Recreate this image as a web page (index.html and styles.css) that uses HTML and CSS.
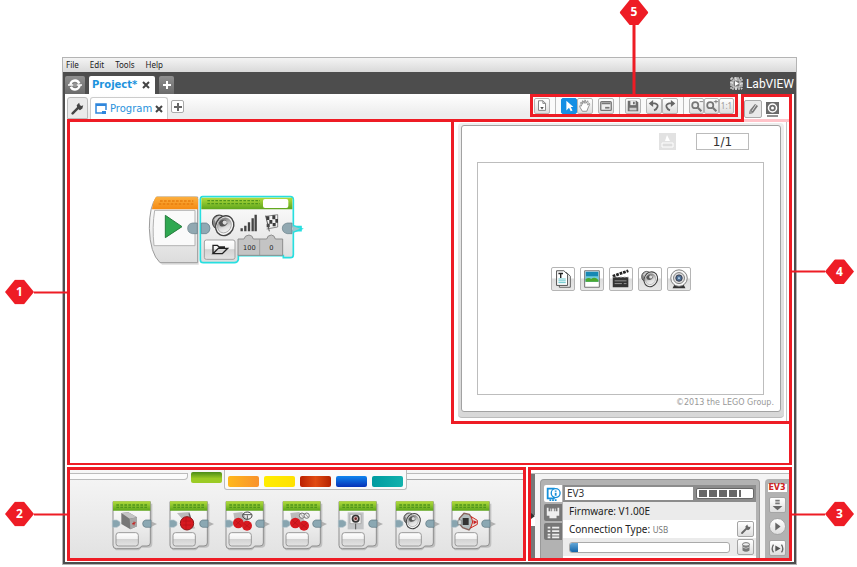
FILE: index.html
```html
<!DOCTYPE html>
<html lang="en">
<head>
<meta charset="utf-8">
<title>EV3 Programming Interface</title>
<link rel="stylesheet" href="styles.css">
</head>
<body>
<svg class="defs" aria-hidden="true">
  <defs>
    <linearGradient id="green" x1="0" y1="0" x2="0" y2="1"><stop offset="0" stop-color="#b2dc3c"/><stop offset="1" stop-color="#5da51c"/></linearGradient>
    <linearGradient id="orange" x1="0" y1="0" x2="0" y2="1"><stop offset="0" stop-color="#fcb040"/><stop offset="1" stop-color="#f58a12"/></linearGradient>
    <linearGradient id="shell" x1="0" y1="0" x2="0" y2="1"><stop offset="0" stop-color="#fff"/><stop offset="1" stop-color="#dcdcdc"/></linearGradient>
    <linearGradient id="key" x1="0" y1="0" x2="0" y2="1"><stop offset="0" stop-color="#fff"/><stop offset=".45" stop-color="#f2f2f2"/><stop offset=".5" stop-color="#d2d2d2"/><stop offset="1" stop-color="#e4e4e4"/></linearGradient>
    <linearGradient id="cone" x1="0" y1="0" x2="1" y2="1"><stop offset="0" stop-color="#555"/><stop offset=".6" stop-color="#ddd"/><stop offset="1" stop-color="#fff"/></linearGradient>
    <symbol id="block" viewBox="0 0 138 156">
      <path d="M11 14H124V134Q124 146 112 146H92L84 154H18Q11 154 11 146Z" fill="#a9a9a9" opacity=".6"/>
      <path d="M6 8H118V132Q118 141 108 141H92Q88 149 78 149H16Q6 149 6 139Z" fill="url(#shell)" stroke="#8e8e8e" stroke-width="3"/>
      <path d="M6 7H118V35H6Z" fill="url(#green)"/>
      <path d="M16 18H108M16 25H108" stroke="#4f951b" stroke-width="4" stroke-dasharray="8 4"/>
      <path d="M4 63H18L27 69V79L18 85H4Z" fill="#88a5b0" stroke="#b8c6cc" stroke-width="2"/>
      <path d="M118 66L138 75L118 85Z" fill="#b0b0b0"/>
      <path d="M120 63H104Q95 65 95 74T104 85H120Z" fill="#8ba8b3" stroke="#5e7681" stroke-width="2"/>
      <rect x="15" y="101" width="67" height="40" rx="8" fill="url(#key)" stroke="#999" stroke-width="3"/>
    </symbol>
    <symbol id="speaker" viewBox="0 0 70 70">
      <ellipse cx="22" cy="26" rx="19" ry="20" fill="#888" stroke="#444" stroke-width="3"/>
      <path d="M8 18Q18 4 30 9L20 44Z" fill="#ccc"/>
      <ellipse cx="38" cy="36" rx="25" ry="29" transform="rotate(28 38 36)" fill="#f4f4f4" stroke="#444" stroke-width="4"/>
      <ellipse cx="37" cy="35" rx="19" ry="22" transform="rotate(28 37 35)" fill="url(#cone)" stroke="#999" stroke-width="2"/>
      <path d="M21 28Q27 17 41 20L46 30Q38 42 25 37Z" fill="#555"/>
      <circle cx="38" cy="27" r="6" fill="#ddd"/>
    </symbol>
    <symbol id="wrench" viewBox="0 0 16 16"><path d="M2 14L9 7" stroke="currentColor" stroke-width="3" stroke-linecap="round"/><path d="M8 8L7 4L10 1L11 4L13 5L15 4L14 8L11 10Z" fill="currentColor"/></symbol>
    <symbol id="close" viewBox="0 0 8 8"><path d="M1 1L7 7M7 1L1 7" stroke="currentColor" stroke-width="2"/></symbol>
    <symbol id="plus" viewBox="0 0 10 10"><path d="M5 1V9M1 5H9" stroke="currentColor" stroke-width="2"/></symbol>
  </defs>
</svg>

<main class="figure">
  <section class="window" aria-label="EV3 software">
    <nav class="menubar"><button>File</button><button>Edit</button><button>Tools</button><button>Help</button></nav>
    <div class="shell">
      <header class="titlebar">
        <button class="home" aria-label="Lobby"><svg width="14" height="14" viewBox="0 0 14 14"><circle cx="7" cy="7" r="4.500" fill="none" stroke="#fff" stroke-width="2.500" stroke-dasharray="12 2"/><path d="M0 7H6M8 7H14" stroke="#fff" stroke-width="1.500"/><circle cx="7" cy="7" r="2" fill="#999"/></svg></button>
        <div class="project-tab"><a href="#project">Project*</a><button aria-label="Close project"><svg width="8" height="8"><use href="#close"/></svg></button></div>
        <button class="add-project" aria-label="Add project"><svg width="10" height="10"><use href="#plus"/></svg></button>
        <div class="labview">
          <svg width="13" height="13" viewBox="0 0 13 13"><path d="M1 1H12V12H1Z" fill="#777" stroke="#eee" stroke-dasharray="2 1"/><path d="M3 3H10V10H3Z" fill="none" stroke="#ddd"/><path d="M5 4L9 6.500L5 9Z" fill="#fff"/><path d="M0 6H3M10 7H13M6 0V3M6 10V13" stroke="#fff"/></svg>
          <span>LabVIEW</span>
        </div>
      </header>

      <div class="document">
        <div class="docbar">
          <button class="tab-wrench" aria-label="Project properties"><svg width="13" height="13"><use href="#wrench"/></svg></button>
          <div class="program-tab">
            <svg width="12" height="12" viewBox="0 0 12 12"><path d="M7 10H1V1H11V7" fill="none" stroke="#2f86dc" stroke-width="1.500"/><path d="M1 2H11" stroke="#2f86dc" stroke-width="2"/><path d="M7 11V8H11V11Z" fill="#2f86dc"/></svg>
            <a href="#program">Program</a>
            <button aria-label="Close program"><svg width="8" height="8"><use href="#close"/></svg></button>
          </div>
          <button class="add-program" aria-label="Add program"><svg width="10" height="10"><use href="#plus"/></svg></button>

          <div class="toolbar" id="toolbar">
            <button class="tool" aria-label="Documentation"><svg viewBox="0 0 16 16"><path d="M4 2H9L12 5V13H4Z" fill="#fff" stroke="#777"/><path d="M9 2V5H12" fill="none" stroke="#777"/><path d="M6 9H10L8 12Z" fill="#555"/></svg></button>
            <i class="sep"></i>
            <div class="tool-group">
              <button class="tool active" aria-label="Select"><svg viewBox="0 0 16 16"><path d="M5 2V13L8 10L10 14L12 13L10 9H13Z" fill="#fff"/></svg></button>
              <button class="tool" aria-label="Pan"><svg viewBox="0 0 16 16"><path d="M5 14L2 9Q1 7 4 8L3 4Q4 3 5 6L5 2Q6 1 7 5L8 1Q9 1 9 5L11 2Q12 3 11 7L13 5Q14 6 12 9L10 14Z" fill="#fff" stroke="#888"/></svg></button>
            </div>
            <button class="tool" aria-label="Comment"><svg viewBox="0 0 16 16"><rect x="2" y="3" width="12" height="10" rx="1" fill="#eee" stroke="#777" stroke-width="1.500"/><path d="M3 5H13" stroke="#777" stroke-width="2"/><path d="M7 10H12" stroke="#777" stroke-width="2"/></svg></button>
            <i class="sep"></i>
            <button class="tool" aria-label="Save"><svg viewBox="0 0 16 16"><path d="M2 2H12L14 4V14H2Z" fill="#6e6e6e"/><path d="M5 2H11V7H5Z" fill="#eee"/><path d="M8 3H10V6H8Z" fill="#6e6e6e"/><path d="M4 10H12V13H4Z" fill="#ccc"/></svg></button>
            <div class="tool-group">
              <button class="tool" aria-label="Undo"><svg viewBox="0 0 16 16"><path d="M4 5H9Q13 6 12 9Q11 12 8 13" fill="none" stroke="#666" stroke-width="2"/><path d="M7 1V9L2 5Z" fill="#666"/></svg></button>
              <button class="tool" aria-label="Redo"><svg viewBox="0 0 16 16"><path d="M12 5H7Q3 6 4 9Q5 12 8 13" fill="none" stroke="#666" stroke-width="2"/><path d="M9 1V9L14 5Z" fill="#666"/></svg></button>
            </div>
            <i class="sep"></i>
            <div class="tool-group zoom">
              <button class="tool" aria-label="Zoom out"><svg viewBox="0 0 16 16"><circle cx="6" cy="7" r="3.500" fill="#eee" stroke="#777" stroke-width="2"/><path d="M9 10L13 14" stroke="#777" stroke-width="2.500"/><path d="M11 3H15" stroke="#777"/></svg></button>
              <button class="tool" aria-label="Zoom in"><svg viewBox="0 0 16 16"><circle cx="6" cy="7" r="3.500" fill="#eee" stroke="#777" stroke-width="2"/><path d="M9 10L13 14" stroke="#777" stroke-width="2.500"/><path d="M10 3H15M12.500 1V5" stroke="#777"/></svg></button>
              <button class="tool ratio">1:1</button>
            </div>
            <div class="callout up"><b>5</b></div>
          </div>

          <div class="side-tabs">
            <button class="edit" aria-label="Edit content"><svg width="14" height="14" viewBox="0 0 14 14"><path d="M4 8L9 2L12 4L7 11L3 12Z" fill="#777"/><path d="M6 9L10 3" stroke="#ddd"/><path d="M3 12L7 11L4 8Z" fill="#999"/></svg></button>
            <button class="view" aria-label="View content"><svg width="13" height="15" viewBox="0 0 13 15"><path d="M0 0H13V12H0Z" fill="#6b6b6b"/><circle cx="6.500" cy="6" r="4" fill="none" stroke="#fff" stroke-width="1.500"/><circle cx="6.500" cy="6" r="1.500" fill="#fff"/><path d="M1 14H12" stroke="#6b6b6b" stroke-width="1.500"/></svg></button>
          </div>
        </div>

        <div class="workspace" id="program">
          <div class="canvas">
            <svg class="program" width="170" height="85" viewBox="0 0 510 255" role="img" aria-label="Start block connected to a sound block">
              <path d="M58 41Q34 60 34 130T66 239H176V42Z" fill="#bbb" opacity=".5"/>
              <path d="M50 36Q28 62 28 130Q30 205 60 233H173V36Z" fill="url(#shell)" stroke="#9b9b9b" stroke-width="3"/>
              <path d="M48 35H165Q174 35 174 44V73H36Q39 48 48 35Z" fill="url(#orange)"/>
              <path d="M60 48H160M56 57H160" stroke="#e77e0e" stroke-width="4" stroke-dasharray="8 4"/>
              <path d="M44 76H165V182H42Q36 125 44 76Z" fill="#fafafa" stroke="#b3b3b3" stroke-width="3"/>
              <path d="M76 91L126 125L76 158Z" fill="#2fa851" stroke="#267d3d" stroke-width="3"/>
              <path d="M172 114H158Q143 116 143 130T158 146H172Z" fill="#91a8b1" stroke="#667d86" stroke-width="2"/>
              <path d="M188 35H451Q460 35 460 44V125H483V137H460V209Q460 218 451 218H430V212H295V224Q293 233 283 233H190Q181 233 181 224V44Q181 35 188 35Z" fill="url(#shell)" stroke="#27dfe0" stroke-width="5"/>
              <path d="M184 38H457V73H184Z" fill="url(#green)"/>
              <path d="M202 47H360M202 56H360" stroke="#4f951b" stroke-width="4" stroke-dasharray="8 4"/>
              <rect x="369" y="42" width="76" height="27" rx="6" fill="#fff"/>
              <path d="M184 114H199Q210 118 210 130T199 146H184Z" fill="#8fa9b4" stroke="#5d7986" stroke-width="2"/>
              <use href="#speaker" x="214" y="84" width="74" height="74"/>
              <path d="M305 139V130M316 139V122M327 139V112M338 139V100M347 139V89" stroke="#444" stroke-width="7"/>
              <path d="M377 94L413 89V126L380 132" fill="none" stroke="#555" stroke-width="2"/>
              <path d="M378 94H388V105H378ZM397 91H406V103H397ZM388 105H397V116H388ZM406 102H414V113H406ZM380 116H389V127H380ZM398 114H407V124H398Z" fill="#3d3d3d"/>
              <path d="M377 92L388 139" stroke="#555" stroke-width="3"/>
              <rect x="193" y="165" width="92" height="58" rx="6" fill="url(#key)" stroke="#a1a1a1" stroke-width="3"/>
              <path d="M219 206V181H232L237 186H253V191M219 206H247L263 190H235Z" fill="none" stroke="#222" stroke-width="4"/>
              <path d="M294 162H312Q314 151 327 150Q338 151 340 162H380Q382 151 394 150Q404 151 406 162H428V211H294Z" fill="#c4c4c4" stroke="#8e8e8e" stroke-width="3"/>
              <path d="M359 163V211" stroke="#8e8e8e" stroke-width="2"/>
              <text x="328" y="194" class="block-value">100</text>
              <text x="394" y="194" class="block-value">0</text>
              <path d="M456 114H442Q427 117 427 130T442 146H456Z" fill="#91a8b1" stroke="#667d86" stroke-width="2"/>
              <path d="M459 121L486 131L459 142" fill="#9cc7cb" stroke="#27dfe0" stroke-width="4"/>
            </svg>
          </div>
          <div class="editor">
            <div class="frame"><div class="card">
              <div class="pager">
                <svg width="17" height="17" viewBox="0 0 17 17"><path d="M0 0H17V17H0Z" fill="#e2e2e2"/><path d="M3 10H14V14H3Z" fill="#ddd" stroke="#fff"/><path d="M6 8L8 2L11 8Z" fill="#fff"/></svg>
                <input aria-label="Page" value="1/1" readonly>
              </div>
              <div class="page">
                <button aria-label="Text"><svg viewBox="0 0 24 24"><path d="M8 5H16L20 9V21H8Z" fill="#eee" stroke="#555"/><path d="M5 3H13L17 7V19H5Z" fill="#fff" stroke="#444"/><path d="M7 6H12M9.500 6V11" stroke="#222" stroke-width="1.500"/><path d="M7 12H15M7 14H15M7 16H15" stroke="#54bfc6"/></svg></button>
                <button aria-label="Image"><svg viewBox="0 0 24 24"><path d="M4 3H20V21H4Z" fill="#fff" stroke="#666"/><path d="M5 4H19V15H5Z" fill="#1788b4"/><path d="M5 9H19V15H5Z" fill="#70cbdc"/><path d="M5 14V12Q9 10 11 12Q15 9 19 13V15H5Z" fill="#4ca82e"/></svg></button>
                <button aria-label="Video"><svg viewBox="0 0 24 24"><path d="M3 10H20V21H3Z" fill="#333"/><path d="M3 9L20 3" stroke="#222" stroke-width="3" stroke-dasharray="3 1"/><path d="M3 10H20" stroke="#999" stroke-dasharray="2 2"/><path d="M5 14H18M5 17H13M15 17H18" stroke="#999"/></svg></button>
                <button aria-label="Sound"><svg viewBox="0 0 24 24"><use href="#speaker" x="2" y="2" width="20" height="20"/></svg></button>
                <button aria-label="Webcam"><svg viewBox="0 0 24 24"><path d="M7 18H17L19 22H5Z" fill="#333"/><circle cx="12" cy="11" r="9" fill="#f5f5f5" stroke="#777"/><circle cx="12" cy="11" r="6" fill="#ddd" stroke="#777"/><circle cx="12" cy="11" r="3.500" fill="#4f7196" stroke="#334"/><circle cx="12" cy="11" r="1" fill="#cfe8ff"/></svg></button>
              </div>
              <small>©2013 the LEGO Group.</small>
            </div></div>
            <i class="rail"></i>
            <div class="callout right"><b>4</b></div>
          </div>
          <div class="callout left"><b>1</b></div>
        </div>

        <div class="bottom">
          <section class="palette" aria-label="Programming palettes">
            <div class="categories">
              <i class="ledge before"></i>
              <div class="current"><button class="green" aria-label="Action"></button></div>
              <div class="others"><button class="amber" aria-label="Flow"></button><button class="yellow" aria-label="Sensor"></button><button class="red" aria-label="Data"></button><button class="blue" aria-label="Advanced"></button><button class="teal" aria-label="My blocks"></button></div>
              <i class="ledge after"></i>
            </div>
            <div class="blocks">
              <button aria-label="Medium motor"><svg viewBox="0 0 138 156"><use href="#block"/><path d="M31 42L52 40L78 55V82L58 91L31 75Z" fill="#777"/><path d="M31 42L52 40L78 55L56 59Z" fill="#c5c5c5"/><path d="M56 59L78 55V82L58 91Z" fill="#a7a7a7"/><path d="M63 75L74 71M69 68V79" stroke="#c5201f" stroke-width="3"/></svg></button>
              <button aria-label="Large motor"><svg viewBox="0 0 138 156"><use href="#block"/><path d="M27 42L65 39L73 75L82 88L66 91L50 68Z" fill="#bbb"/><path d="M63 43L70 65" stroke="#666" stroke-width="4"/><circle cx="57" cy="73" r="20" fill="#d71920" stroke="#8b1516" stroke-width="3"/><path d="M45 66H69M44 78H70M54 54V92" stroke="#b51318" stroke-width="2"/></svg></button>
              <button aria-label="Move steering"><svg viewBox="0 0 138 156"><use href="#block"/><path d="M28 42L55 39L81 82L71 93L32 65Z" fill="#bbb"/><circle cx="43" cy="72" r="16" fill="#d71920"/><circle cx="69" cy="80" r="15" fill="#d71920"/><path d="M34 64L52 80M35 79L51 63M59 73L79 88M60 88L78 72" stroke="#b51318" stroke-width="2"/><ellipse cx="70" cy="50" rx="14" ry="11" fill="none" stroke="#444" stroke-width="3"/><path d="M56 47H84M70 49V62" stroke="#555" stroke-width="3"/></svg></button>
              <button aria-label="Move tank"><svg viewBox="0 0 138 156"><use href="#block"/><path d="M28 42L55 39L81 82L71 93L32 65Z" fill="#bbb"/><circle cx="43" cy="72" r="16" fill="#d71920"/><circle cx="69" cy="80" r="15" fill="#d71920"/><path d="M34 64L52 80M35 79L51 63M59 73L79 88M60 88L78 72" stroke="#b51318" stroke-width="2"/><circle cx="63" cy="50" r="8" fill="#eee" stroke="#777" stroke-width="3"/><circle cx="77" cy="50" r="8" fill="#eee" stroke="#777" stroke-width="3"/><path d="M58 44L68 55M72 44L82 55" stroke="#777" stroke-width="2"/></svg></button>
              <button aria-label="Display"><svg viewBox="0 0 138 156"><use href="#block"/><path d="M32 40H80V91H32Z" fill="#c2c4c6"/><path d="M39 46H72V74H39Z" fill="#f1f1f1" stroke="#999" stroke-width="2"/><circle cx="56" cy="59" r="12" fill="#333"/><circle cx="56" cy="59" r="7" fill="#e6c6c5"/><circle cx="56" cy="59" r="4" fill="#6d2828"/><path d="M56 74V91" stroke="#555" stroke-width="3"/></svg></button>
              <button aria-label="Sound"><svg viewBox="0 0 138 156"><use href="#block"/><use href="#speaker" x="27" y="37" width="57" height="57"/></svg></button>
              <button aria-label="Brick status light"><svg viewBox="0 0 138 156"><use href="#block"/><path d="M28 58L42 43L58 46L68 61V78L57 93L38 86L28 74Z" fill="#b5bfc0" stroke="#87635c" stroke-width="4"/><path d="M38 57H56V78H38Z" fill="#333"/><path d="M24 63H34V77H24Z" fill="#d8dede" stroke="#777" stroke-width="2"/><path d="M64 53L82 64V76L62 87L68 69Z" fill="#e7ddd8" stroke="#cf3028" stroke-width="3"/><path d="M70 64L82 69L71 76Z" fill="#c91f26"/></svg></button>
            </div>
            <div class="callout left"><b>2</b></div>
          </section>

          <section class="hardware" aria-label="Hardware page">
            <button class="collapse" aria-label="Collapse"><svg width="4" height="6" viewBox="0 0 4 6"><path d="M0 0L4 3L0 6Z" fill="#333"/></svg></button>
            <div class="brick">
              <div class="brick-tabs">
                <button class="on" aria-label="Brick information"><svg viewBox="0 0 18 18"><path d="M3 3H10V14H3Z" fill="none" stroke="#168fd9" stroke-width="2"/><circle cx="12" cy="8" r="5" fill="#fff" stroke="#168fd9" stroke-width="1.500"/><path d="M12 5V6.500M12 7.500V11" stroke="#168fd9" stroke-width="2"/><path d="M5 16H13" stroke="#168fd9" stroke-width="2" stroke-dasharray="2 1"/></svg></button>
                <button aria-label="Port view"><svg viewBox="0 0 18 18"><path d="M2 3H4V7H6V4H7V7H8V4H10V7H11V4H12V7H14V3H16V12H13V15H5V12H2Z" fill="#eee"/></svg></button>
                <button aria-label="Available bricks"><svg viewBox="0 0 18 18"><path d="M3 4H6M3 8H6M3 12H6M3 15H6M8 4H16M8 8H16M8 12H16M8 15H16" stroke="#eee" stroke-width="2"/></svg></button>
              </div>
              <div class="brick-info">
                <div class="brick-head"><input aria-label="Brick name" value="EV3"><span class="battery"><i></i><i></i><i></i><i></i><i></i></span></div>
                <div class="row shaded"><span>Firmware: V1.00E</span></div>
                <div class="row"><span>Connection Type: <em>USB</em></span><button aria-label="Wireless setup"><svg viewBox="0 0 16 16"><use href="#wrench" x="2" y="2" width="12" height="12"/></svg></button></div>
                <div class="row shaded"><div class="memory" role="img" aria-label="Memory used"><i></i></div><button aria-label="Memory browser"><svg viewBox="0 0 16 16"><path d="M4 5V12Q8 15 12 12V5" fill="#777"/><ellipse cx="8" cy="5" rx="4" ry="2" fill="#eee" stroke="#666"/><path d="M4 8Q8 11 12 8" fill="none" stroke="#ccc"/></svg></button></div>
              </div>
            </div>
            <div class="runner">
              <strong>EV3</strong>
              <button aria-label="Download"><svg viewBox="0 0 17 17"><path d="M6 3H11M6 6H11" stroke="#777" stroke-width="2"/><path d="M3 9H14L8.500 14Z" fill="#666"/></svg></button>
              <button class="round" aria-label="Download and run"><svg viewBox="0 0 17 17"><path d="M6 4L12 8.500L6 13Z" fill="#666"/></svg></button>
              <button aria-label="Run selected"><svg viewBox="0 0 17 17"><path d="M6 5L12 8.500L6 12Z" fill="#555"/><path d="M4 4Q1 8.500 4 13M13 4Q16 8.500 13 13" fill="none" stroke="#666" stroke-width="1.500"/></svg></button>
            </div>
            <div class="callout right"><b>3</b></div>
          </section>
        </div>
      </div>
    </div>
  </section>
</main>
</body>
</html>
```
FILE: styles.css
```css
:root { --red: #ee1c25; }
* { box-sizing: border-box; }
body { margin: 0; background: #fff; color: #333; font: 10px/14px "Noto Sans", sans-serif; }
button { margin: 0; padding: 0; border: 0; background: none; color: inherit; font: inherit; display: flex; align-items: center; justify-content: center; }
svg { display: block; flex: none; }
a { text-decoration: none; }
input { min-width: 0; border-radius: 0; }
.defs { position: absolute; width: 0; height: 0; }

.figure { min-height: 100vh; padding: 57px 60px 2px 62px; display: flex; }
.window { flex: 1; display: flex; flex-direction: column; border: 1px solid #b4b4b4; }
.menubar { height: 14px; padding-left: 3px; display: flex; gap: 11px; background: linear-gradient(#f4f4f4, #d9d9d9); font-size: 8px; color: #222; }
.shell { flex: 1; display: flex; flex-direction: column; padding: 0 2px 2px; background: #4d4d4d; }

.titlebar { height: 22px; padding-top: 4px; display: flex; gap: 4px; }
.home { width: 20px; background: linear-gradient(#8f8f8f, #6a6a6a); border-radius: 2px 2px 0 0; }
.project-tab { display: flex; align-items: center; gap: 5px; padding: 0 5px 0 3px; background: #fff; border-radius: 2px 2px 0 0; font: bold 10px/14px "DejaVu Sans", sans-serif; color: #444; }
.project-tab a { color: #1d93dd; }
.add-project { width: 15px; background: linear-gradient(#8f8f8f, #6a6a6a); color: #fff; border-radius: 2px 2px 0 0; }
.labview { margin-left: auto; display: flex; align-items: center; gap: 3px; padding-bottom: 3px; color: #fff; font: 12px/14px Roboto, sans-serif; }

.document { flex: 1; display: flex; flex-direction: column; padding: 0 2px 1px; background: #fff; }
.docbar { height: 25px; display: flex; background: linear-gradient(#fff, #ededed 80%); }
.tab-wrench { width: 21px; margin-top: 3px; background: #eaeaea; border: 1px solid #bbb; border-radius: 3px 3px 0 0; color: #444; }
.program-tab { margin: 3px 0 0 2px; padding: 0 4px; display: flex; align-items: center; gap: 3px; background: #fff; border: 1px solid #ccc; border-bottom: 0; border-radius: 3px 3px 0 0; font: 10px/14px "DejaVu Sans", sans-serif; }
.program-tab a { color: #2a92dc; }
.program-tab button { color: #444; }
.add-program { width: 13px; height: 13px; margin: 6px 0 0 3px; background: #fff; border: 1px solid #aaa; border-radius: 2px; color: #666; }

.toolbar { position: relative; margin-left: auto; height: 23px; padding: 0 1px; display: flex; align-items: center; gap: 5px; border: 3px solid var(--red); background: #fafafa; }
.tool { width: 16px; height: 16px; border: 1px solid #b5b5b5; border-radius: 2px; background: linear-gradient(#fff, #ddd); color: #999; }
.tool svg { width: 14px; height: 14px; }
.tool.active { background: #168fe4; border-color: #168fe4; }
.tool-group { display: flex; }
.zoom .tool { width: 15px; }
.ratio { font-size: 8px; }
.sep { width: 1px; height: 17px; background: #bbb; }
.side-tabs { position: relative; z-index: 2; width: 51px; margin-left: 3px; display: flex; align-items: flex-start; gap: 4px; padding-top: 3px; border: 3px solid var(--red); border-bottom: 0; background: #fff; }
.side-tabs::after { content: ""; position: absolute; left: 0; right: 0; bottom: -3px; height: 3px; background: #ffc3c9; }
.side-tabs button { height: 18px; }
.edit { width: 18px; border: 1px solid #aaa; border-radius: 2px; background: #e9e9e9; }

.workspace { position: relative; flex: 1; display: grid; grid-template-columns: 53fr 47fr; }
.workspace::after, .editor::after, .palette::after, .hardware::after { content: ""; position: absolute; inset: 0; border: 3px solid var(--red); pointer-events: none; }
.workspace::after { border-bottom-width: 2px; }
.canvas { position: relative; }
.program { position: absolute; left: 73px; top: 66px; }
.block-value { font: 20px "DejaVu Sans", sans-serif; fill: #222; text-anchor: middle; }
.editor { position: relative; margin-bottom: 41px; padding: 4px 8px 6px 7px; display: flex; }
.rail { position: absolute; right: 5px; top: 3px; bottom: 3px; width: 1px; background: #c4c4c4; }
.frame { flex: 1; display: flex; padding: 2px 3px 5px; background: linear-gradient(#eee, #d8d8d8); border: 0 solid #bbb; border-bottom-width: 1px; border-radius: 4px; }
.card { flex: 1; display: flex; flex-direction: column; padding: 7px 16px 0 15px; border: 1px solid #a2a2a2; border-radius: 3px; background: #fff; }
.pager { display: flex; justify-content: flex-end; gap: 20px; padding-right: 15px; }
.pager input { width: 53px; height: 17px; padding: 0; border: 1px solid #bbb; background: #fff; color: #333; text-align: center; font: 12px/14px "DejaVu Sans", sans-serif; }
.page { flex: 1; margin-top: 12px; display: flex; align-items: center; justify-content: center; gap: 5px; border: 1px solid #bdbdbd; }
.page button { width: 24px; height: 24px; border: 1px solid #b5b5b5; border-radius: 2px; background: linear-gradient(#fff 45%, #ddd 50%, #e8e8e8); }
.page svg { width: 22px; height: 22px; }
.card small { margin-right: -10px; text-align: right; font: 8px/16px "DejaVu Sans", sans-serif; color: #999; }

.bottom { height: 94px; margin-top: 2px; display: grid; grid-template-columns: minmax(0, 459fr) minmax(0, 264fr); gap: 2px; }
.palette { position: relative; padding: 3px; background: linear-gradient(#f7f7f7, #e1e1e1); }
.categories { height: 20px; display: flex; align-items: flex-start; }
.ledge { flex: 1; height: 7px; margin-top: 3px; background: #fbfbfb; border: 1px solid #bbb; }
.ledge.before { border-left: 0; border-radius: 0 0 4px 0; }
.ledge.after { border-right: 0; border-left: 0; border-bottom-color: #aaa; background: #f8f8f8; }
.current { padding: 2px 2px 0 3px; }
.categories button { width: 31px; height: 11px; border-radius: 2px; }
.others { height: 20px; padding: 6px 3px 0; display: flex; gap: 5px; background: #fafafa; border: 1px solid #bbb; border-top: 0; border-radius: 0 0 3px 3px; }
.green { background: linear-gradient(#4b8b18, #9bcb25 60%); }
.amber { background: linear-gradient(90deg, #ffb81c, #f9922c); }
.yellow { background: linear-gradient(90deg, #ffed00, #ffe100); }
.red { background: linear-gradient(90deg, #bb2100, #e14b12, #b52200); }
.blue { background: linear-gradient(#1185ef, #0732b7); }
.teal { background: linear-gradient(90deg, #009ba0, #13b2ad); }
.blocks { padding: 9px 27px 0 41px; display: flex; justify-content: space-between; }
.blocks svg { width: 46px; height: 52px; }

.hardware { position: relative; padding: 12px 3px 3px; display: flex; gap: 5px; background: linear-gradient(#fff 6px, #bbb 6px, #bbb 7px, #f4f4f4 7px); }
.collapse { width: 4px; flex: none; margin-top: -5px; background: linear-gradient(#777 41px, #fff 41px, #fff 52px, #777 52px); }
.brick { flex: 1; min-width: 0; display: flex; gap: 1px; padding: 5px 3px 0; border: solid #999; border-width: 1px 1px 0; border-radius: 4px 4px 0 0; background: #b2b2b2; }
.brick-tabs { display: flex; flex-direction: column; gap: 2px; }
.brick-tabs button { width: 18px; height: 17px; background: #777; border-radius: 2px 0 0 2px; }
.brick-tabs .on { background: #fff; }
.brick-tabs svg { width: 16px; height: 16px; }
.brick-info { flex: 1; min-width: 0; background: #fff; }
.brick-head { height: 17px; display: flex; align-items: center; gap: 3px; padding: 0 2px; background: #8c8c8c; }
.brick-head input { flex: 1; width: 0; height: 13px; padding: 0 2px; border: 0; background: #fff; color: #333; font: 10px/13px "Noto Sans", sans-serif; }
.battery { width: 58px; height: 11px; flex: none; display: flex; align-items: center; gap: 2px; padding-left: 2px; border: 1px solid #666; border-radius: 2px; background: #fff; }
.battery i { width: 8px; height: 7px; background: #666; }
.battery i:last-child { width: 2px; }
.row { height: 18px; display: flex; align-items: center; justify-content: space-between; padding: 0 2px 0 6px; color: #222; }
.row.shaded { background: #ebebeb; }
.row em { font-style: normal; font-size: 8px; color: #777; }
.row button, .runner button { width: 17px; height: 16px; flex: none; border: 1px solid #a5a5a5; border-radius: 2px; background: linear-gradient(#fff, #dedede); color: #666; }
.row svg { width: 14px; height: 14px; }
.memory { flex: 1; height: 11px; margin-right: 7px; border: 1px solid #aaa; border-radius: 3px; background: #fff; }
.memory i { display: block; width: 5%; height: 9px; border-radius: 2px 0 0 2px; background: linear-gradient(#62a6d7, #1466a9); }
.runner { width: 24px; flex: none; display: flex; flex-direction: column; align-items: center; gap: 5px; padding-top: 5px; border-radius: 4px 0 0 0; background: #b2b2b2; }
.runner strong { width: 19px; background: #fff; color: #c22; text-align: center; font: bold 8px/8px "DejaVu Sans", sans-serif; }
.runner .round { height: 17px; border-radius: 50%; }
.runner svg { width: 15px; height: 15px; }

.callout { position: absolute; z-index: 3; display: flex; align-items: center; }
.callout::after { content: ""; background: var(--red); }
.callout b { width: 29px; height: 25px; background: var(--red); color: #fff; clip-path: polygon(0 50%, 35% 0, 65% 0, 100% 50%, 65% 100%, 35% 100%); text-align: center; font: bold 12px/24px "Noto Sans", sans-serif; }
.callout.left, .callout.right { top: 50%; transform: translateY(-50%); }
.callout.left { right: 100%; }
.callout.right { left: 100%; flex-direction: row-reverse; }
.callout.left::after, .callout.right::after { width: 33px; height: 2px; }
.callout.up { left: 50%; bottom: 100%; transform: translateX(-50%); flex-direction: column; }
.callout.up::after { width: 3px; height: 72px; }
```
